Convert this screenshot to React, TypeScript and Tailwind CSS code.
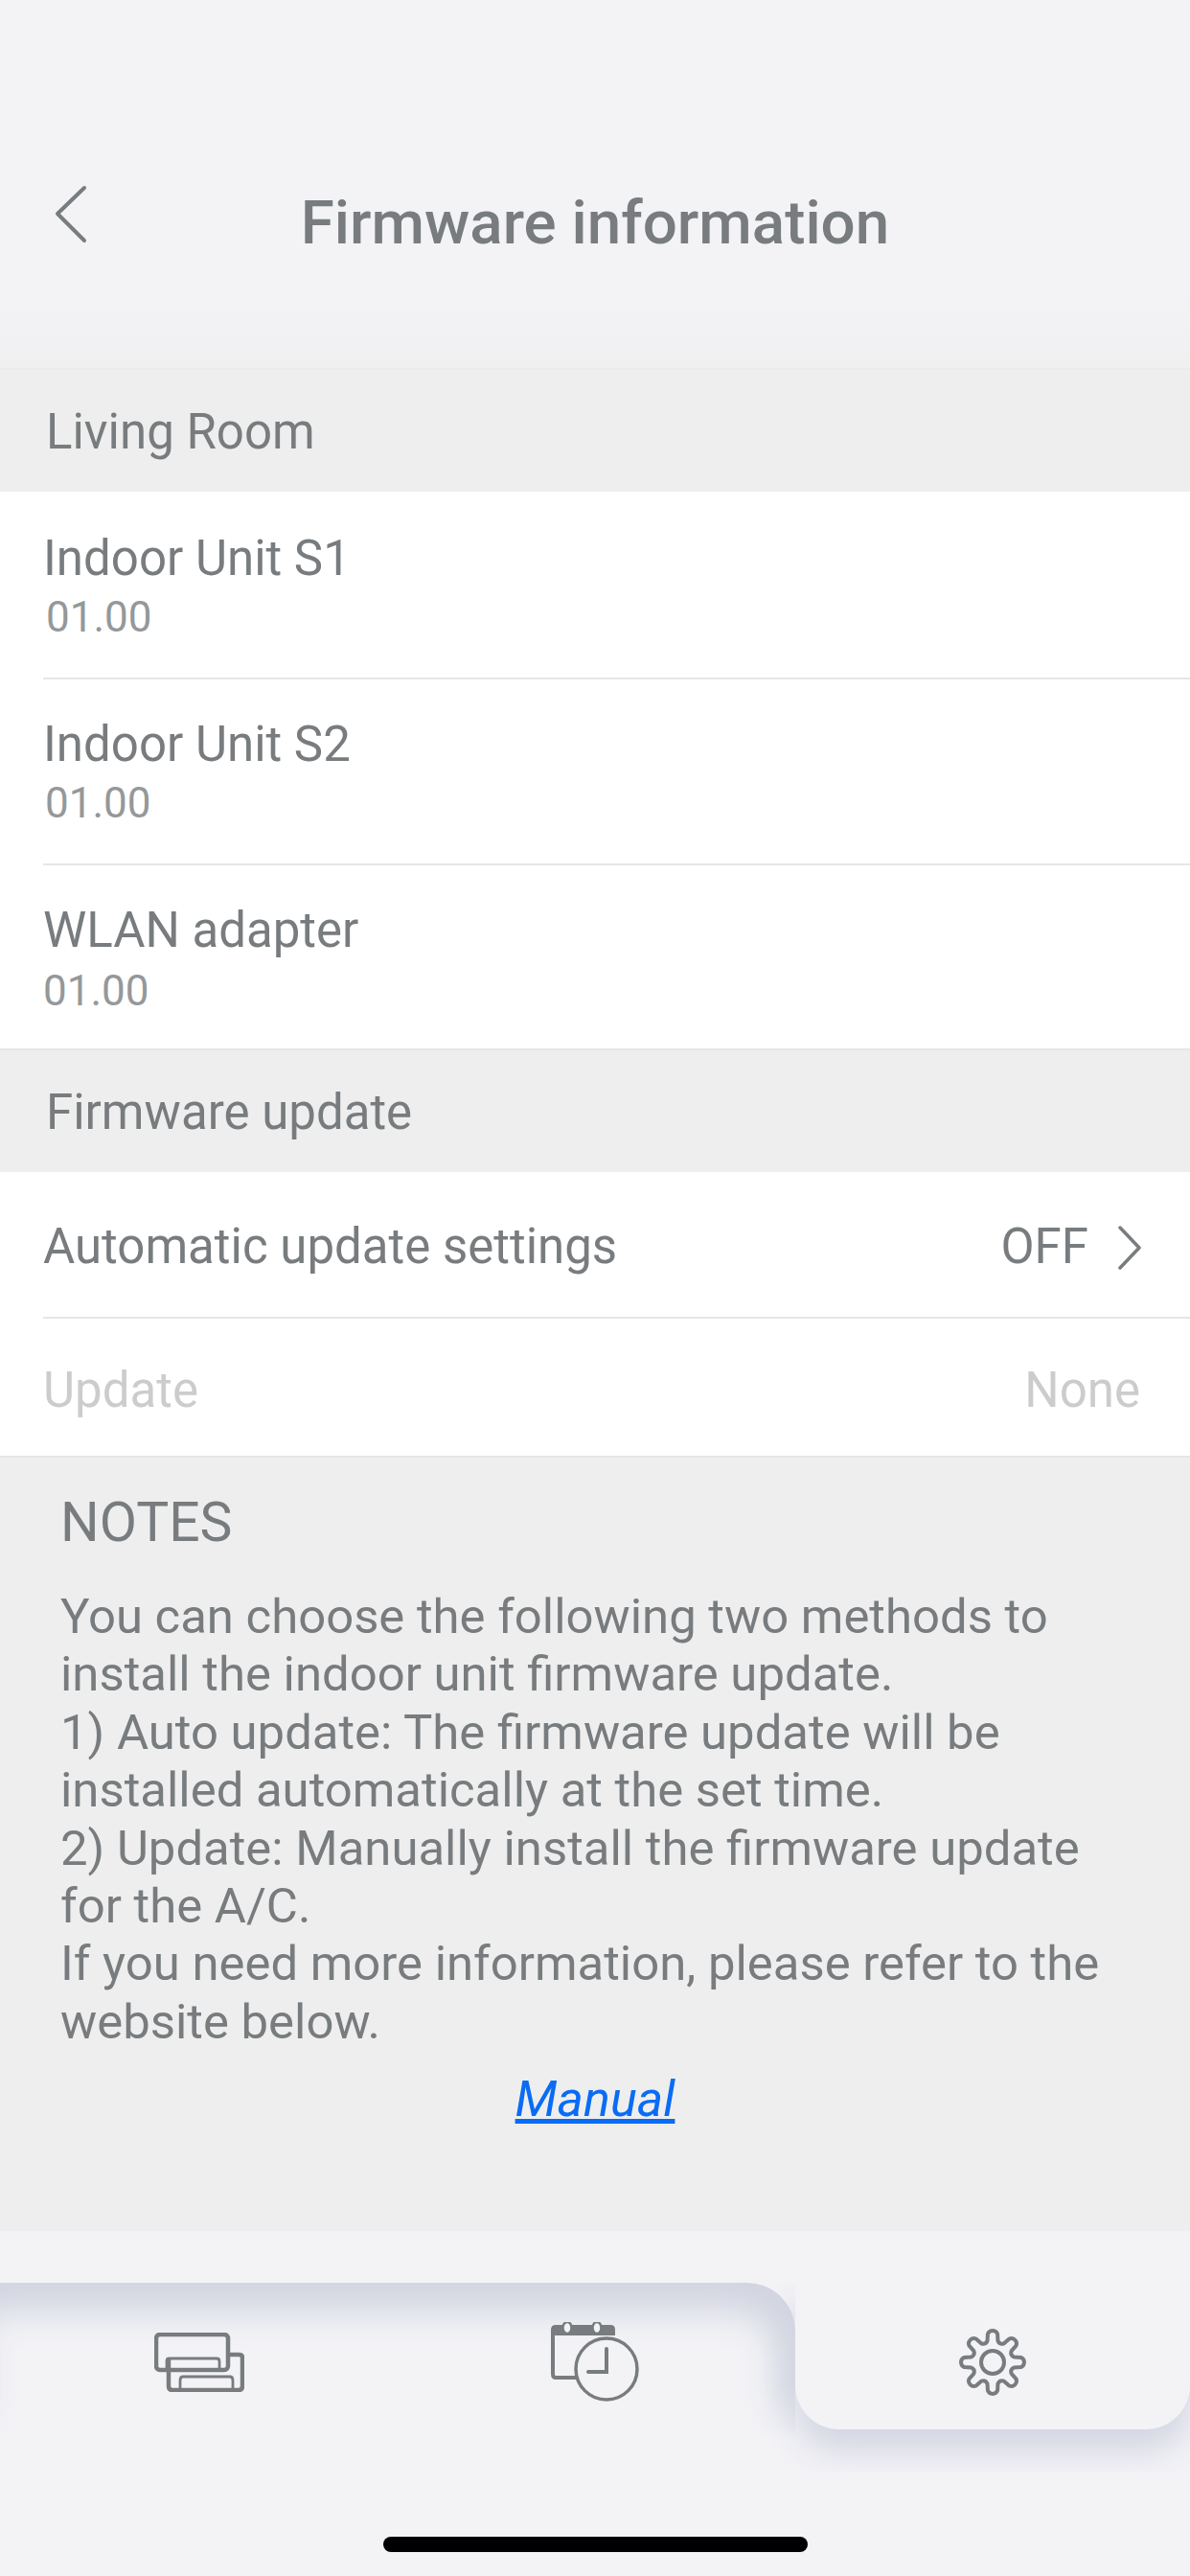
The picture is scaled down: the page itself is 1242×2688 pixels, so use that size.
const gearPath = (() => {
  const c = 40;
  const n = 8;
  let d = "";
  for (let i = 0; i < n; i++) {
    const a = (i * 2 * Math.PI) / n - Math.PI / 2;
    const p = (r: number, t: number) => `${(c + r * Math.cos(a + t)).toFixed(2)} ${(c + r * Math.sin(a + t)).toFixed(2)}`;
    d += `${i === 0 ? "M" : "L"}${p(23, -0.24)} L${p(30, -0.17)} A5.5 5.5 0 0 1 ${p(30, 0.17)} L${p(23, 0.24)} `;
    const next = (r: number, t: number) => {
      const b = a + (2 * Math.PI) / n;
      return `${(c + r * Math.cos(b + t)).toFixed(2)} ${(c + r * Math.sin(b + t)).toFixed(2)}`;
    };
    d += `Q${p(19.5, Math.PI / n)} ${next(23, -0.24)} `;
  }
  return d + "Z";
})();

function Row({ title, value, h, head, vx }: { title: string; value: string; h: string; head: string; vx: string }) {
  return (
    <div className={`bg-white ${h} flex flex-col pl-[45px]`}>
      <div className="flex-1 flex flex-col border-b-2 border-[#e6e6e6]">
        <div className={`${head} text-[51px] leading-[87px] text-[#787c7e] whitespace-nowrap`}>{title}</div>
        <div className={`text-[44px] leading-[46px] ${vx} text-[#94989a] whitespace-nowrap`}>{value}</div>
      </div>
    </div>
  );
}

function Section({ children, h }: { children: string; h: string }) {
  return (
    <div className={`${h} bg-[#eeeeee] flex items-center pl-[48px] pt-[4px] text-[51px] text-[#787c7e] whitespace-nowrap`}>{children}</div>
  );
}

export default function App() {
  return (
    <div className="w-[1242px] h-[2688px] bg-[#f3f3f6] font-['Roboto',sans-serif] flex flex-col overflow-hidden">
      <div className="h-[385px] bg-gradient-to-b from-[#f3f3f6] from-[80%] to-[#f0f0f1] relative border-b border-[#ebebeb]">
        <svg className="absolute left-[56px] top-[192px]" width="36" height="62" viewBox="0 0 36 62" fill="none">
          <path d="M32 4 L4 31 L32 59" stroke="#787c7e" strokeWidth="4" strokeLinecap="round" strokeLinejoin="round" />
        </svg>
        <div className="w-full text-center pt-[193px] text-[63.7px] leading-[80px] font-medium text-[#787c7e]">Firmware information</div>
      </div>

      <Section h="h-[128px]">Living Room</Section>
      <Row title="Indoor Unit S1" value="01.00" h="h-[196px]" head="h-[108px] pt-[26px]" vx="pl-[3px]" />
      <Row title="Indoor Unit S2" value="01.00" h="h-[194px]" head="h-[106px] pt-[24px]" vx="pl-[2px]" />
      <div className="bg-white h-[193px] flex flex-col pl-[45px] border-b-2 border-[#e6e6e6]">
        <div className="h-[108px] pt-[24px] text-[51px] leading-[87px] text-[#787c7e] whitespace-nowrap">WLAN adapter</div>
        <div className="text-[44px] leading-[46px] text-[#94989a] whitespace-nowrap">01.00</div>
      </div>
      <Section h="h-[127px]">Firmware update</Section>

      <div className="bg-white pl-[45px]">
        <div className="h-[153px] flex items-center justify-between pt-[6px] pr-[50px] border-b-2 border-[#e6e6e6] text-[51px] text-[#787c7e] whitespace-nowrap">
          <span>Automatic update settings</span>
          <span className="flex items-center gap-[30px]">
            OFF
            <svg width="26" height="46" viewBox="0 0 26 46" fill="none">
              <path d="M3 2 L23 23 L3 44" stroke="#787c7e" strokeWidth="3.5" strokeLinecap="round" strokeLinejoin="round" />
            </svg>
          </span>
        </div>
        <div className="h-[143px] flex items-center justify-between pt-[7px] pr-[52px] text-[51px] text-[#cccccc] whitespace-nowrap">
          <span>Update</span>
          <span>None</span>
        </div>
      </div>

      <div className="h-[809px] bg-[#eeeeee] border-t-2 border-[#e6e6e6] px-[63px] pt-[33px] text-[#787c7e]">
        <div className="text-[57px] leading-[70px]">NOTES</div>
        <div className="mt-[33px] text-[50.85px] leading-[60.4px] w-[1130px]">
          <div>You can choose the following two methods to</div>
          <div>install the indoor unit firmware update.</div>
          <div>1) Auto update: The firmware update will be</div>
          <div>installed automatically at the set time.</div>
          <div>2) Update: Manually install the firmware update</div>
          <div>for the A/C.</div>
          <div>If you need more information, please refer to the</div>
          <div>website below.</div>
        </div>
        <div className="mt-[21px] text-center italic underline text-[52px] leading-[60px] text-[#0a6cf5]">Manual</div>
      </div>

      <div className="flex-1 flex flex-col pt-[54px]">
        <div className="h-[198px] flex overflow-hidden">
          <div className="relative w-[830px] h-[198px] shrink-0 flex">
            <div className="absolute inset-0 rounded-tr-[50px] shadow-[inset_-18px_30px_36px_#d2d5e1] [mask-image:linear-gradient(to_bottom,black_55%,transparent_82%)]" />
            <div className="relative w-[415px] h-[166px] flex items-center justify-center">
              <svg width="94" height="62" viewBox="0 0 94 62" fill="none" stroke="#787c7e">
                <path d="M15 26 V56 Q15 60 19 60 H88 Q92 60 92 56 V26 Q92 23 88 23 H78" strokeWidth="4.5" />
                <rect x="2" y="2" width="75" height="37" rx="4" strokeWidth="4.5" />
                <path d="M13 38 V30 Q13 27 16 27 H65 Q68 27 68 30 V38" strokeWidth="2.8" />
                <path d="M27 60 V50 Q27 46 30 46 H79 Q82 46 82 50 V60" strokeWidth="2.8" />
              </svg>
            </div>
            <div className="relative w-[415px] h-[166px] flex items-center justify-center pr-[3px]">
              <svg width="92" height="84" viewBox="0 0 92 84" fill="none" stroke="#787c7e">
                <path d="M26 58 H5 Q2 58 2 54 V8 Q2 5 5 5 H62 Q65 5 65 8 V14" strokeWidth="4" />
                <path d="M2 14 V8 Q2 5 5 5 H65 V13 H2 Z" fill="#787c7e" strokeWidth="2" />
                <ellipse cx="17" cy="6" rx="4.5" ry="6" fill="#f3f3f6" stroke="#787c7e" strokeWidth="2.5" />
                <ellipse cx="48" cy="6" rx="4.5" ry="6" fill="#f3f3f6" stroke="#787c7e" strokeWidth="2.5" />
                <circle cx="58" cy="49" r="32" strokeWidth="3.5" fill="#f3f3f6" />
                <path d="M58 28 V52 H39" strokeWidth="4" strokeLinecap="round" />
              </svg>
            </div>
          </div>
          <div className="relative w-[412px] h-[153px] shrink-0 bg-[#f3f3f6] rounded-b-[46px] shadow-[0_22px_36px_#d2d5e1] flex items-center justify-center pt-[12px]">
            <svg width="80" height="80" viewBox="0 0 80 80" fill="none" stroke="#787c7e" strokeWidth="4" strokeLinejoin="round">
              <path d={gearPath} />
              <circle cx="40" cy="40" r="12" />
            </svg>
          </div>
        </div>
        <div className="mt-[67px] mx-auto w-[443px] h-[16px] rounded-full bg-black" />
      </div>
    </div>
  );
}
